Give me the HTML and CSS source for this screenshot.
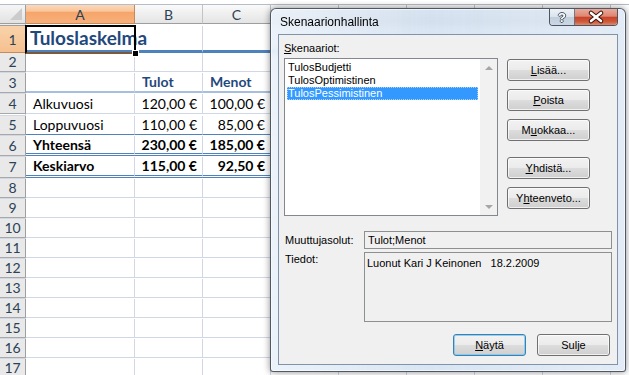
FILE: index.html
```html
<!DOCTYPE html>
<html lang="fi">
<head>
    <meta charset="UTF-8">
    <meta name="viewport" content="width=device-width, initial-scale=1.0">
    <title>Skenaarionhallinta</title>
    <link rel="stylesheet" href="styles.css">
</head>
<body>
    <div class="excel">
        <div class="formula-edge"></div>

        <div class="row head-row">
            <div class="corner"></div>
            <div class="colhead active">A</div>
            <div class="colhead">B</div>
            <div class="colhead">C</div>
            <div class="colhead"></div>
            <div class="colhead"></div>
            <div class="colhead"></div>
            <div class="colhead"></div>
            <div class="colhead"></div>
            <div class="colhead"></div>
        </div>

        <div class="row r1">
            <div class="rowhead active">1</div>
            <div class="cell title">Tuloslaskelma</div>
            <div class="cell"></div><div class="cell"></div><div class="cell"></div><div class="cell"></div>
            <div class="cell"></div><div class="cell"></div><div class="cell"></div><div class="cell"></div>
        </div>
        <div class="row r2">
            <div class="rowhead">2</div>
            <div class="cell"></div><div class="cell"></div><div class="cell"></div><div class="cell"></div>
            <div class="cell"></div><div class="cell"></div><div class="cell"></div><div class="cell"></div><div class="cell"></div>
        </div>
        <div class="row r3">
            <div class="rowhead">3</div>
            <div class="cell"></div>
            <div class="cell heading">Tulot</div>
            <div class="cell heading">Menot</div>
            <div class="cell"></div><div class="cell"></div><div class="cell"></div><div class="cell"></div><div class="cell"></div><div class="cell"></div>
        </div>
        <div class="row r4">
            <div class="rowhead">4</div>
            <div class="cell text">Alkuvuosi</div>
            <div class="cell num">120,00 €</div>
            <div class="cell num">100,00 €</div>
            <div class="cell"></div><div class="cell"></div><div class="cell"></div><div class="cell"></div><div class="cell"></div><div class="cell"></div>
        </div>
        <div class="row r5">
            <div class="rowhead">5</div>
            <div class="cell text">Loppuvuosi</div>
            <div class="cell num">110,00 €</div>
            <div class="cell num">85,00 €</div>
            <div class="cell"></div><div class="cell"></div><div class="cell"></div><div class="cell"></div><div class="cell"></div><div class="cell"></div>
        </div>
        <div class="row r6">
            <div class="rowhead">6</div>
            <div class="cell text bold">Yhteensä</div>
            <div class="cell num bold">230,00 €</div>
            <div class="cell num bold">185,00 €</div>
            <div class="cell"></div><div class="cell"></div><div class="cell"></div><div class="cell"></div><div class="cell"></div><div class="cell"></div>
        </div>
        <div class="row r7">
            <div class="rowhead">7</div>
            <div class="cell text bold">Keskiarvo</div>
            <div class="cell num bold">115,00 €</div>
            <div class="cell num bold">92,50 €</div>
            <div class="cell"></div><div class="cell"></div><div class="cell"></div><div class="cell"></div><div class="cell"></div><div class="cell"></div>
        </div>
        <div class="row"><div class="rowhead">8</div><div class="cell"></div><div class="cell"></div><div class="cell"></div><div class="cell"></div><div class="cell"></div><div class="cell"></div><div class="cell"></div><div class="cell"></div><div class="cell"></div></div>
        <div class="row"><div class="rowhead">9</div><div class="cell"></div><div class="cell"></div><div class="cell"></div><div class="cell"></div><div class="cell"></div><div class="cell"></div><div class="cell"></div><div class="cell"></div><div class="cell"></div></div>
        <div class="row"><div class="rowhead">10</div><div class="cell"></div><div class="cell"></div><div class="cell"></div><div class="cell"></div><div class="cell"></div><div class="cell"></div><div class="cell"></div><div class="cell"></div><div class="cell"></div></div>
        <div class="row"><div class="rowhead">11</div><div class="cell"></div><div class="cell"></div><div class="cell"></div><div class="cell"></div><div class="cell"></div><div class="cell"></div><div class="cell"></div><div class="cell"></div><div class="cell"></div></div>
        <div class="row"><div class="rowhead">12</div><div class="cell"></div><div class="cell"></div><div class="cell"></div><div class="cell"></div><div class="cell"></div><div class="cell"></div><div class="cell"></div><div class="cell"></div><div class="cell"></div></div>
        <div class="row"><div class="rowhead">13</div><div class="cell"></div><div class="cell"></div><div class="cell"></div><div class="cell"></div><div class="cell"></div><div class="cell"></div><div class="cell"></div><div class="cell"></div><div class="cell"></div></div>
        <div class="row"><div class="rowhead">14</div><div class="cell"></div><div class="cell"></div><div class="cell"></div><div class="cell"></div><div class="cell"></div><div class="cell"></div><div class="cell"></div><div class="cell"></div><div class="cell"></div></div>
        <div class="row"><div class="rowhead">15</div><div class="cell"></div><div class="cell"></div><div class="cell"></div><div class="cell"></div><div class="cell"></div><div class="cell"></div><div class="cell"></div><div class="cell"></div><div class="cell"></div></div>
        <div class="row"><div class="rowhead">16</div><div class="cell"></div><div class="cell"></div><div class="cell"></div><div class="cell"></div><div class="cell"></div><div class="cell"></div><div class="cell"></div><div class="cell"></div><div class="cell"></div></div>
        <div class="row"><div class="rowhead">17</div><div class="cell"></div><div class="cell"></div><div class="cell"></div><div class="cell"></div><div class="cell"></div><div class="cell"></div><div class="cell"></div><div class="cell"></div><div class="cell"></div></div>

        <div class="selection"><span class="fill-handle"></span></div>
    </div>

    <div class="dialog">
        <div class="titlebar">
            <span class="title">Skenaarionhallinta</span>
            <div class="caption-buttons">
                <span class="help">?</span>
                <span class="close">
                    <svg width="42" height="16" viewBox="0 0 42 16">
                        <path d="M16 4 L26 12 M26 4 L16 12" stroke="#3a1208" stroke-width="4.6" stroke-linecap="round"/>
                        <path d="M16 4 L26 12 M26 4 L16 12" stroke="#ffffff" stroke-width="2.6" stroke-linecap="round"/>
                    </svg>
                </span>
            </div>
        </div>

        <div class="client">
            <div class="list-label"><u>S</u>kenaariot:</div>
            <div class="main">
                <div class="listbox">
                    <ul class="items">
                        <li>TulosBudjetti</li>
                        <li>TulosOptimistinen</li>
                        <li class="selected">TulosPessimistinen</li>
                    </ul>
                    <div class="scrollbar">
                        <span class="arrow up"></span>
                        <span class="arrow down"></span>
                    </div>
                </div>
                <div class="side-buttons">
                    <button type="button"><u>L</u>isää...</button>
                    <button type="button"><u>P</u>oista</button>
                    <button type="button">M<u>u</u>okkaa...</button>
                    <button type="button" class="group-start"><u>Y</u>hdistä...</button>
                    <button type="button">Y<u>h</u>teenveto...</button>
                </div>
            </div>

            <div class="field-row">
                <span class="label">Muuttujasolut:</span>
                <div class="field">Tulot;Menot</div>
            </div>
            <div class="field-row top">
                <span class="label">Tiedot:</span>
                <div class="field big">Luonut Kari J Keinonen&nbsp;&nbsp; 18.2.2009</div>
            </div>

            <div class="footer-buttons">
                <button type="button" class="default"><u>N</u>äytä</button>
                <button type="button">Sulje</button>
            </div>
        </div>
    </div>
</body>
</html>
```

FILE: styles.css
```css
body {
    margin: 0;
    width: 629px;
    height: 375px;
    overflow: hidden;
    background-color: #ffffff;
    font-family: 'Liberation Sans', Arial, sans-serif;
}

/* ---------- spreadsheet ---------- */

.excel {
    position: relative;
    font-family: 'Lato', 'Liberation Sans', sans-serif;
    font-size: 14px;
    color: #000000;
}

.formula-edge {
    height: 4px;
    background-color: #ffffff;
    border-bottom: 1px solid #b5bdc7;
}

.row {
    display: grid;
    grid-template-columns: 26px 109px 68px 68px repeat(5, 68px);
    height: 20px;
}

.head-row { height: 21px; }
.r1 { height: 27px; }
.r3 { height: 21px; }
.r4 { height: 22px; }
.r6 { height: 21px; }
.r7 { height: 22px; }

.corner,
.colhead,
.rowhead,
.cell {
    box-sizing: border-box;
}

.corner {
    position: relative;
    background: linear-gradient(#f6f6f6, #e2e2e2);
    border-right: 1px solid #9e9e9e;
    border-bottom: 1px solid #9e9e9e;
}

.corner::after {
    content: "";
    position: absolute;
    right: 3px;
    bottom: 3px;
    border-left: 12px solid transparent;
    border-bottom: 12px solid #cbcbcb;
}

.colhead {
    display: flex;
    align-items: center;
    justify-content: center;
    background: linear-gradient(#fafafa 0%, #f0f0f0 45%, #e4e4e4 100%);
    border-right: 1px solid #c3c3c3;
    border-bottom: 1px solid #9e9e9e;
    color: #2b4257;
}

.colhead.active {
    background: linear-gradient(#fbd9bb 0%, #f9c49a 35%, #f6a56a 40%, #f8b07b 100%);
    border-right-color: #c48a5a;
    border-bottom-color: #c48a5a;
}

.rowhead {
    display: flex;
    align-items: center;
    justify-content: center;
    background-color: #e9e9e9;
    border-right: 1px solid #9e9e9e;
    border-bottom: 1px solid #a8a8a8;
    color: #2b4257;
}

.rowhead.active {
    background: linear-gradient(#f9d3ab, #f6c08f);
    border-bottom-color: #c48a5a;
}

.cell {
    display: flex;
    align-items: center;
    padding: 0 5px 0 7px;
    white-space: nowrap;
    border-right: 1px solid #d0d7e5;
    border-bottom: 1px solid #d0d7e5;
}

.cell.title {
    padding-left: 4px;
    padding-bottom: 1px;
    overflow: visible;
    font-size: 19px;
    font-weight: bold;
    color: #1f497d;
}

.r1 .cell { border-bottom: 3px solid #4f81bd; }
.r3 .cell:nth-child(-n+4) { border-bottom: 2px solid #a7bfde; }
.r5 .cell:nth-child(-n+4) { border-bottom: 1px solid #4f81bd; }
.r6 .cell:nth-child(-n+4) { border-bottom: 3px double #4f81bd; }
.r7 .cell:nth-child(-n+4) { border-bottom: 3px double #4f81bd; }

.cell.heading {
    font-weight: bold;
    color: #1f497d;
}

.cell.num {
    justify-content: flex-end;
    padding-right: 5px;
}

.cell.bold { font-weight: bold; }

.selection {
    position: absolute;
    left: 25px;
    top: 25px;
    width: 111px;
    height: 29px;
    box-sizing: border-box;
    border: 2px solid #000000;
    border-bottom-color: #7a5a3c;
}

.fill-handle {
    position: absolute;
    right: -5px;
    bottom: -5px;
    width: 5px;
    height: 5px;
    background-color: #000000;
    border: 1px solid #ffffff;
}

/* ---------- dialog window ---------- */

.dialog {
    position: absolute;
    left: 270px;
    top: 8px;
    width: 356px;
    height: 364px;
    box-sizing: border-box;
    display: flex;
    flex-direction: column;
    padding: 0 7px 6px 7px;
    border: 1px solid rgba(30, 40, 52, 0.75);
    border-radius: 6px 6px 3px 3px;
    background-color: rgba(206, 222, 240, 0.78);
    background-image: linear-gradient(to right, rgba(255, 255, 255, 0.5), rgba(255, 255, 255, 0) 45%, rgba(255, 255, 255, 0.25));
    backdrop-filter: blur(3px);
    box-shadow: 0 0 7px rgba(0, 0, 0, 0.45), inset 0 0 0 1px rgba(255, 255, 255, 0.6);
    font-size: 11px;
}

.titlebar {
    height: 25px;
    display: flex;
    align-items: center;
    padding-left: 2px;
}

.title {
    font-size: 12px;
    color: #000000;
}

.caption-buttons {
    margin-left: auto;
    align-self: flex-start;
    display: flex;
    height: 17px;
    box-sizing: border-box;
    border: 1px solid rgba(40, 48, 60, 0.8);
    border-top: none;
    border-radius: 0 0 4px 4px;
    overflow: hidden;
}

.help {
    width: 24px;
    display: flex;
    align-items: center;
    justify-content: center;
    background: linear-gradient(#eef2f7 0%, #dbe3ec 48%, #c2cedb 52%, #cbd7e4 100%);
    border-right: 1px solid rgba(40, 48, 60, 0.6);
    font-size: 13px;
    font-weight: bold;
    color: #ffffff;
    text-shadow: 1px 0 #4d5868, -1px 0 #4d5868, 0 1px #4d5868, 0 -1px #4d5868;
}

.close {
    width: 42px;
    display: flex;
    align-items: center;
    justify-content: center;
    background: linear-gradient(#eaa99b 0%, #dd8772 45%, #c8432a 52%, #cf5a3c 80%, #df8a6c 100%);
}

.client {
    flex: 1;
    box-sizing: border-box;
    padding: 7px 5px 0 5px;
    background-color: #f0f0f0;
    border: 1px solid #7f93ab;
    color: #000000;
}

.list-label {
    height: 13px;
    line-height: 13px;
    margin-bottom: 3px;
}

.main {
    display: flex;
    gap: 9px;
}

.listbox {
    width: 214px;
    height: 158px;
    box-sizing: border-box;
    display: flex;
    background-color: #ffffff;
    border: 1px solid #828790;
}

.items {
    flex: 1;
    list-style: none;
    margin: 0;
    padding: 2px 2px 0 2px;
}

.items li {
    height: 13px;
    line-height: 13px;
    padding-left: 1px;
    white-space: nowrap;
}

.items li.selected {
    background-color: #3399ff;
    color: #ffffff;
    outline: 1px dotted #a8d3ff;
    outline-offset: -1px;
}

.scrollbar {
    width: 17px;
    display: flex;
    flex-direction: column;
    justify-content: space-between;
    align-items: center;
    padding: 7px 0 6px 0;
    background-color: #f1f1f1;
}

.arrow {
    width: 0;
    height: 0;
    border-left: 4px solid transparent;
    border-right: 4px solid transparent;
}

.arrow.up { border-bottom: 4px solid #a6a6a6; }
.arrow.down { border-top: 4px solid #a6a6a6; }

.side-buttons {
    display: flex;
    flex-direction: column;
    gap: 8px;
    margin-top: 1px;
}

.side-buttons .group-start {
    margin-top: 8px;
}

button {
    width: 83px;
    height: 22px;
    padding: 0;
    box-sizing: border-box;
    font-family: 'Liberation Sans', Arial, sans-serif;
    font-size: 11px;
    color: #000000;
    border: 1px solid #707070;
    border-radius: 3px;
    background: linear-gradient(#f2f2f2 0%, #ebebeb 50%, #dddddd 50%, #cfcfcf 100%);
    box-shadow: inset 0 0 0 1px rgba(255, 255, 255, 0.7);
}

.field-row {
    display: flex;
    align-items: center;
    margin-top: 15px;
}

.field-row.top {
    align-items: flex-start;
    margin-top: 3px;
}

.label {
    width: 80px;
    padding-left: 1px;
    box-sizing: border-box;
    line-height: 13px;
}

.field-row.top .label {
    padding-top: 1px;
}

.field {
    width: 248px;
    height: 18px;
    box-sizing: border-box;
    padding: 0 3px;
    line-height: 16px;
    border: 1px solid #8e8f8f;
    background-color: #f0f0f0;
    white-space: nowrap;
}

.field.big {
    height: 70px;
    padding: 4px 2px;
    line-height: 13px;
}

.footer-buttons {
    display: flex;
    justify-content: flex-end;
    gap: 11px;
    margin-top: 12px;
    padding-right: 2px;
}

.footer-buttons button {
    width: 73px;
}

.footer-buttons .default {
    border-color: #3c7fb1;
    box-shadow: inset 0 0 0 1px rgba(120, 200, 245, 0.8);
}
```
